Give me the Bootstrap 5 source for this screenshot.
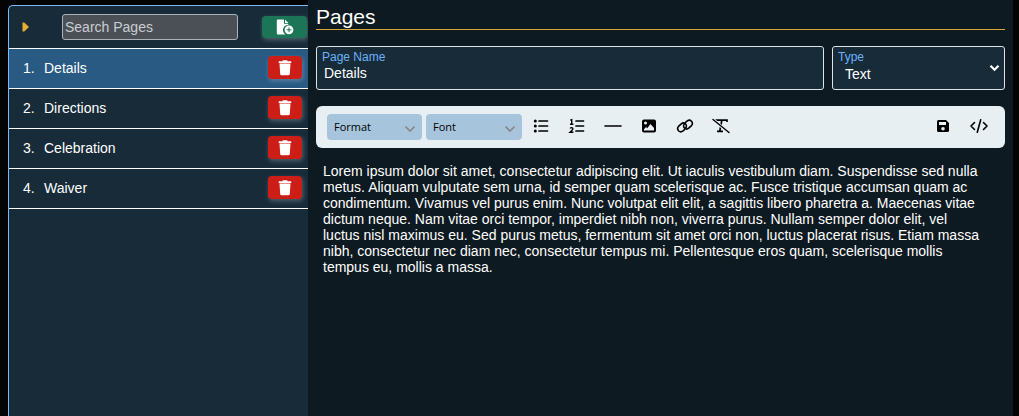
<!DOCTYPE html>
<html lang="en">
<head>
<meta charset="utf-8">
<meta name="viewport" content="width=device-width, initial-scale=1">
<title>Pages</title>
<link href="https://cdn.jsdelivr.net/npm/bootstrap@5.3.0/dist/css/bootstrap.min.css" rel="stylesheet">
<style>
body { background: #040404; color: #fff; font: 14px/16px "Liberation Sans", Arial, sans-serif; }
.app-shell { padding: 0 6px 0 8px; }
.page-side { flex: 0 0 300px; margin-top: 5px; background: #172b38; border: solid #7db8fa; border-width: 1px 0 0 1px; border-top-left-radius: 5px; }
.side-head { height: 43px; padding: 0 1px 0 13px; border-bottom: 1px solid #fff; }
.toggle { width: 40px; height: 26px; color: #e8ae32; }
.search-box { width: 176px; height: 26px; padding: 0 2px; background: #4b5057; color: #fff; border: 1px solid #adb2b8; border-radius: 3px; font-size: 14px; }
.search-box::placeholder { color: #c9cdd1; opacity: 1; }
.search-box:focus { background: #4b5057; color: #fff; }
.act { --bs-btn-border-width: 0; color: #fff; border-radius: 4px; box-shadow: 1px 2px 5px rgba(190, 205, 215, .35); }
.act:hover { color: #fff; }
.act-add { width: 45px; height: 22px; background: #1b7556; }
.act-del { width: 34px; height: 23px; background: #cc1e16; }
.page-row { height: 40px; padding: 0 6px 2px 14px; border-bottom: 1px solid #fff; }
.page-row.current { background: #285a84; }
.page-row a { color: #fff; text-decoration: none; }
.page-no { width: 21px; }
.main-pane { min-width: 0; padding: 5px 8px 0; background: #0e1a21; }
.main-title { height: 25px; margin-bottom: 16px; font-size: 21px; line-height: 24px; font-weight: 400; border-bottom: 1px solid #d9a736; }
.field { height: 44px; padding: 3px 5px 0; background: #172b38; border: 1px solid #dfe3e6; border-radius: 3px; }
.field label { display: block; color: #6bb2fb; font-size: 12px; line-height: 14px; }
.field input, .field select { display: block; width: 100%; border: 0; outline: 0; background: transparent; color: #fff; font-size: 14px; }
.field input { height: 18px; padding: 0 2px; }
.field select { height: 20px; padding: 0 7px; appearance: none; }
.type-field { flex: 0 0 173px; }
.type-caret { right: 4px; top: 17px; pointer-events: none; }
.tool-bar { min-height: 42px; margin-top: 16px; padding: 0 11px; background: #e8eff3; border-radius: 6px; color: #000; }
.drop { height: 26px; padding: 0 7px; border: 0; border-radius: 4px; background: #a6c5dd; color: #000; font: 11px/16px "Open Sans", sans-serif; }
.drop svg { margin-top: 3px; color: #85898d; }
.drop-format { width: 95px; margin-right: 4px; }
.drop-font { width: 96px; margin-right: 1px; }
.tool { width: 36px; height: 28px; padding: 0 0 4px; border: 0; background: transparent; color: #000; }
.tool:last-child { margin-right: -3px; }
.copy { padding: 15px 18px 16px 7px; }
</style>
</head>
<body>
<svg class="d-none" aria-hidden="true">
  <symbol id="trash" viewBox="0 0 14 16"><path fill="currentColor" d="M4.300 1.200 5 .3h4l.7.900H13.300v1.800H.7V1.200zM1.500 3.400h11L11.800 14q-.1 1.200-1.300 1.200h-7Q2.300 15.200 2.200 14z"/></symbol>
  <symbol id="chev" viewBox="0 0 10 6"><path d="m.5.600 4.500 4.400L9.500.600" fill="none" stroke="currentColor" stroke-width="1.700"/></symbol>
</svg>
<div class="app-shell d-flex min-vh-100">
  <nav class="page-side" aria-label="Pages">
    <div class="side-head d-flex align-items-center">
      <button type="button" class="toggle btn border-0 p-0 text-start flex-shrink-0" aria-label="Collapse"><svg class="d-block" width="10" height="10" viewBox="0 0 10 10"><path d="M.500.500H2.200L7 5 2.200 9.500H.500z" fill="#e8ae32"/></svg></button>
      <input type="text" class="search-box" placeholder="Search Pages" aria-label="Search Pages">
      <button type="button" class="btn act act-add p-0 ms-auto d-flex align-items-center justify-content-center" aria-label="Add page">
        <svg width="18" height="16" viewBox="0 0 18 16"><path fill="#fff" d="M2 .5h6v4.300h4.300V6A5 5 0 0 0 8.400 14.500q.4.600.9 1H2Q.800 15.500.800 14.300V1.700Q.800.500 2 .500zM9 .500l3.400 3.400H9z"/><circle cx="13" cy="10.800" r="4.400" fill="#fff"/><path d="M13 8.400v4.800M10.600 10.800h4.800" stroke="#1b7556" stroke-width="1"/></svg>
      </button>
    </div>
    <ol class="list-unstyled mb-0">
      <li class="page-row current d-flex align-items-center"><span class="page-no">1.</span><a href="#details">Details</a><button type="button" class="btn act act-del p-0 ms-auto d-flex align-items-center justify-content-center" aria-label="Delete Details"><svg width="14" height="16"><use href="#trash"/></svg></button></li>
      <li class="page-row d-flex align-items-center"><span class="page-no">2.</span><a href="#directions">Directions</a><button type="button" class="btn act act-del p-0 ms-auto d-flex align-items-center justify-content-center" aria-label="Delete Directions"><svg width="14" height="16"><use href="#trash"/></svg></button></li>
      <li class="page-row d-flex align-items-center"><span class="page-no">3.</span><a href="#celebration">Celebration</a><button type="button" class="btn act act-del p-0 ms-auto d-flex align-items-center justify-content-center" aria-label="Delete Celebration"><svg width="14" height="16"><use href="#trash"/></svg></button></li>
      <li class="page-row d-flex align-items-center"><span class="page-no">4.</span><a href="#waiver">Waiver</a><button type="button" class="btn act act-del p-0 ms-auto d-flex align-items-center justify-content-center" aria-label="Delete Waiver"><svg width="14" height="16"><use href="#trash"/></svg></button></li>
    </ol>
  </nav>
  <main class="main-pane flex-grow-1">
    <h1 class="main-title">Pages</h1>
    <div class="d-flex gap-2">
      <div class="field flex-grow-1"><label for="pageName">Page Name</label><input id="pageName" type="text" value="Details"></div>
      <div class="field type-field position-relative"><label for="pageType">Type</label><select id="pageType"><option>Text</option></select>
        <svg class="type-caret position-absolute" width="11" height="8" viewBox="0 0 11 8"><path d="m1.500 1.800 4 4 4-4" fill="none" stroke="#fff" stroke-width="2.200"/></svg></div>
    </div>
    <div class="tool-bar d-flex align-items-center" role="toolbar" aria-label="Formatting">
      <button type="button" class="drop drop-format d-flex align-items-center justify-content-between">Format <svg width="10" height="6"><use href="#chev"/></svg></button>
      <button type="button" class="drop drop-font d-flex align-items-center justify-content-between">Font <svg width="10" height="6"><use href="#chev"/></svg></button>
      <button type="button" class="tool" aria-label="Bulleted list"><svg width="18" height="16" viewBox="0 0 18 16"><g fill="currentColor"><circle cx="3.300" cy="3" r="1.500"/><circle cx="3.300" cy="8" r="1.500"/><circle cx="3.300" cy="13" r="1.500"/></g><path d="M7 3h8.500M7 8h8.500M7 13h8.500" stroke="currentColor" stroke-width="1.700" stroke-linecap="round"/></svg></button>
      <button type="button" class="tool" aria-label="Numbered list"><svg width="18" height="16" viewBox="0 0 18 16"><path d="M2.300 2.200 3.700 1.700v4.500M2 6.300h3.400M2.200 10.500q.3-.9 1.400-.9 1.300 0 1.300 1.200 0 .9-2.800 3.400h3.300" fill="none" stroke="currentColor" stroke-width="1.400"/><path d="M8 3h7.500M8 8h7.500M8 13h7.500" stroke="currentColor" stroke-width="1.700" stroke-linecap="round"/></svg></button>
      <button type="button" class="tool" aria-label="Horizontal rule"><svg width="18" height="16" viewBox="0 0 18 16"><path d="M1 8h16" stroke="currentColor" stroke-width="1.600" stroke-linecap="round"/></svg></button>
      <button type="button" class="tool" aria-label="Image"><svg width="18" height="16" viewBox="0 0 18 16"><path fill="currentColor" fill-rule="evenodd" d="M4 1.500h10q2 0 2 2v9q0 2-2 2H4q-2 0-2-2v-9q0-2 2-2zM5.500 3.500a1.500 1.500 0 1 0 0 3 1.500 1.500 0 0 0 0-3zM4 12.500h10V10l-3.500-4-3.300 4.200L6 9l-2 2.300z"/></svg></button>
      <button type="button" class="tool" aria-label="Link"><svg width="18" height="16" viewBox="0 0 18 16"><g fill="none" stroke="currentColor" stroke-width="1.600" stroke-linecap="round"><path d="M8.500 11.700 6.700 13.200Q4.500 14.700 2.500 12.700.700 10.500 2.500 8.400L5.300 5.800Q7.500 4 9.600 6 11.200 8 9.700 9.900"/><path d="M9.500 4.300 11.300 2.800Q13.500 1.300 15.500 3.300 17.300 5.500 15.500 7.600L12.700 10.200Q10.500 12 8.400 10 6.800 8 8.300 6.100"/></g></svg></button>
      <button type="button" class="tool" aria-label="Clear formatting"><svg width="20" height="16" viewBox="0 0 20 16"><path d="M5 4V2.200h11V4M10.800 2.500 8.800 13M6 13.300h6" fill="none" stroke="currentColor" stroke-width="1.700"/><path d="m3 2.200 14 12" stroke="#e8eff3" stroke-width="3"/><path d="m2 1.500 16 13" stroke="currentColor" stroke-width="1.400" stroke-linecap="round"/></svg></button>
      <button type="button" class="tool ms-auto" aria-label="Save"><svg width="16" height="16" viewBox="0 0 16 16"><path fill="currentColor" fill-rule="evenodd" d="M3.500 2H11l3 3v7.500q0 1.500-1.500 1.500h-9Q2 14 2 12.500v-9Q2 2 3.500 2zM4 4v3h7V4zM8 9a1.800 1.800 0 1 0 0 3.600A1.800 1.800 0 0 0 8 9z"/></svg></button>
      <button type="button" class="tool" aria-label="Source code"><svg width="20" height="16" viewBox="0 0 20 16"><path d="M5.500 4.500 2 8l3.500 3.500M14.500 4.500 18 8l-3.500 3.500M11.700 1.700 8.300 14.300" fill="none" stroke="currentColor" stroke-width="1.600" stroke-linecap="round" stroke-linejoin="round"/></svg></button>
    </div>
    <p class="copy mb-0">Lorem ipsum dolor sit amet, consectetur adipiscing elit. Ut iaculis vestibulum diam. Suspendisse sed nulla metus. Aliquam vulputate sem urna, id semper quam scelerisque ac. Fusce tristique accumsan quam ac condimentum. Vivamus vel purus enim. Nunc volutpat elit elit, a sagittis libero pharetra a. Maecenas vitae dictum neque. Nam vitae orci tempor, imperdiet nibh non, viverra purus. Nullam semper dolor elit, vel luctus nisl maximus eu. Sed purus metus, fermentum sit amet orci non, luctus placerat risus. Etiam massa nibh, consectetur nec diam nec, consectetur tempus mi. Pellentesque eros quam, scelerisque mollis tempus eu, mollis a massa.</p>
  </main>
</div>
<script src="https://cdn.jsdelivr.net/npm/bootstrap@5.3.0/dist/js/bootstrap.bundle.min.js"></script>
</body>
</html>
